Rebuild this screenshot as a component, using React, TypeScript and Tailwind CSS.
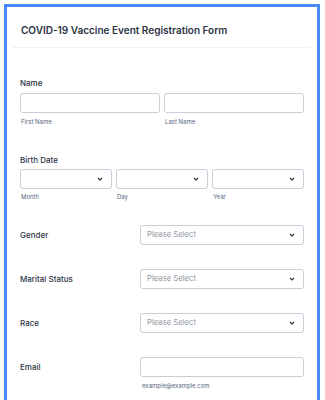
const chevron = (
  <svg width="6" height="4" viewBox="0 0 6 4" fill="none" className="shrink-0">
    <path d="M1 1l2 2 2-2" stroke="#2c3345" strokeWidth="1.1" />
  </svg>
);

function Select({ placeholder, className = "" }: { placeholder?: string; className?: string }) {
  return (
    <div
      className={`h-[20px] flex items-center justify-between pl-[6px] pr-[8px] border border-[#c8ceda] rounded-[3px] bg-white ${className}`}
    >
      <span className="text-[7.7px] text-[#8f96a3]">{placeholder ?? ""}</span>
      {chevron}
    </div>
  );
}

function Input({ className = "" }: { className?: string }) {
  return <div className={`h-[20px] border border-[#c8ceda] rounded-[3px] bg-white ${className}`} />;
}

function SubLabel({ children }: { children: string }) {
  return <div className="text-[6px] leading-[10px] text-[#57647e] pl-[1px]">{children}</div>;
}

function Row({ label, children, mt }: { label: string; children: React.ReactNode; mt: string }) {
  return (
    <div className={`flex ${mt}`}>
      <div className="w-[120px] h-[20px] flex items-center text-[8px] font-medium text-[#2c3345]">{label}</div>
      <div className="flex-1">{children}</div>
    </div>
  );
}

export default function App() {
  return (
    <div className="min-h-[400px] bg-white pt-1 pl-1 pr-[5px] overflow-hidden" style={{ fontFamily: "Inter, 'Noto Sans', sans-serif" }}>
      <div className="border-[3px] border-[#4a8af4] min-h-[460px] bg-white">
        <div className="px-[7px]">
          <div className="pl-[7px] pt-[16px] pb-[10px] border-b border-dotted border-[#e3e6ec]">
            <h1 className="text-[10px] leading-[14px] font-semibold text-[#2c3345]">
              COVID-19 Vaccine Event Registration Form
            </h1>
          </div>
        </div>

        <div className="px-[13px]">
          <div className="mt-[28px] text-[8px] leading-[14px] font-medium text-[#2c3345]">Name</div>
          <div className="mt-[3px] grid grid-cols-2 gap-x-[4px]">
            <div>
              <Input />
              <div className="mt-[4px]"><SubLabel>First Name</SubLabel></div>
            </div>
            <div>
              <Input />
              <div className="mt-[4px]"><SubLabel>Last Name</SubLabel></div>
            </div>
          </div>

          <div className="mt-[26px] text-[8px] leading-[14px] font-medium text-[#2c3345]">Birth Date</div>
          <div className="mt-[2px] grid grid-cols-3 gap-x-[4px]">
            {["Month", "Day", "Year"].map((s) => (
              <div key={s}>
                <Select />
                <div className="mt-[3px]"><SubLabel>{s}</SubLabel></div>
              </div>
            ))}
          </div>

          <Row label="Gender" mt="mt-[23px]">
            <Select placeholder="Please Select" />
          </Row>
          <Row label="Marital Status" mt="mt-[24px]">
            <Select placeholder="Please Select" />
          </Row>
          <Row label="Race" mt="mt-[24px]">
            <Select placeholder="Please Select" />
          </Row>
          <Row label="Email" mt="mt-[24px]">
            <Input />
            <div className="mt-[4px] pl-[1px]"><SubLabel>example@example.com</SubLabel></div>
          </Row>
        </div>
      </div>
    </div>
  );
}
